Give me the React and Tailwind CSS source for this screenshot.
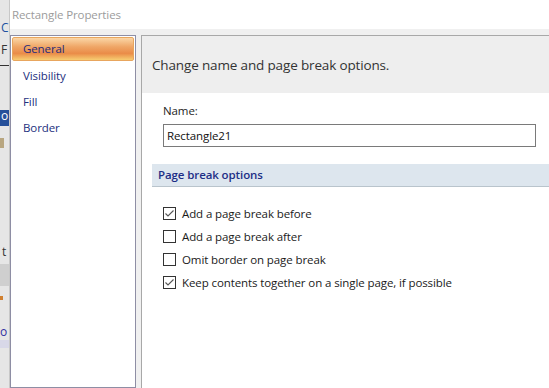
const items = ["General", "Visibility", "Fill", "Border"]

const options = [
  { label: "Add a page break before", checked: true },
  { label: "Add a page break after", checked: false },
  { label: "Omit border on page break", checked: false },
  { label: "Keep contents together on a single page, if possible", checked: true },
]

function CheckBox({ checked }) {
  return (
    <span className="flex h-[13px] w-[13px] shrink-0 items-center justify-center border border-[#333333] bg-white">
      {checked && (
        <svg width="11" height="11" viewBox="0 0 11 11" fill="none">
          <path d="M1.5 5.5 L4 8 L9.5 2.5" stroke="#555555" strokeWidth="1.1" />
        </svg>
      )}
    </span>
  )
}

// fragments of the window behind the dialog
function BackStrip() {
  return (
    <div className="flex w-[10px] shrink-0 flex-col border-r border-[#c8c8c8] bg-[#e6e6e6] text-[12px] leading-none">
      <div className="h-[22px]" />
      <div className="h-[14px] pl-[1px] text-[#2050a0]">C</div>
      <div className="h-[8px]" />
      <div className="h-[14px] pl-[1px] text-[#333]">F</div>
      <div className="h-[7px]" />
      <div className="h-[1px] bg-[#333]" />
      <div className="h-[44px]" />
      <div className="h-[16px] bg-[#26509a] pl-[1px] text-white">o</div>
      <div className="h-[12px]" />
      <div className="h-[10px] w-[4px] bg-[#b8a680]" />
      <div className="h-[98px]" />
      <div className="h-[12px] pl-[2px] text-[#333]">t</div>
      <div className="h-[6px]" />
      <div className="h-[22px] bg-[#cfcfcf]" />
      <div className="h-[10px]" />
      <div className="h-[4px] w-[3px] bg-[#d08030]" />
      <div className="h-[26px]" />
      <div className="h-[14px] text-[#3030a0]">o</div>
      <div className="h-[8px] bg-[#d8d8e8]" />
    </div>
  )
}

export default function App() {
  return (
    <div
      className="flex h-[388px] w-[549px] overflow-hidden bg-[#f0f0f0] tracking-[-0.1px]"
      style={{ fontFamily: '"Open Sans", "Noto Sans", sans-serif' }}
    >
      <BackStrip />
      <div className="flex min-w-0 flex-1 flex-col">
        <div className="flex h-[29px] shrink-0 items-center bg-white pl-[2px] text-[11.5px] text-[#9c9c9c]">
          Rectangle Properties
        </div>
        <div className="flex flex-1 gap-[5px] pt-[6px]">
          {/* nav list */}
          <div className="flex w-[126px] shrink-0 flex-col gap-[2px] border border-[#8e8ea4] bg-white px-[1px] pt-[1px]">
            {items.map((item, i) => (
              <div
                key={item}
                className={
                  i === 0
                    ? "flex h-[24px] items-center rounded-[2px] border border-[#e8a65e] bg-[linear-gradient(to_bottom,#fbd6a6_0%,#efa666_40%,#ea8c48_70%,#f7cd72_100%)] pl-[10px] text-[11.5px] text-[#1f2a7c]"
                    : "flex h-[24.4px] items-center pl-[11px] text-[11.5px] text-[#23307e]"
                }
              >
                {item}
              </div>
            ))}
          </div>

          {/* content */}
          <div className="flex min-w-0 flex-1 flex-col border-l border-t border-[#a8a8a8] bg-white">
            <div className="flex h-[57px] shrink-0 items-center bg-[#eeeeee] pl-[10px] pt-[1px] text-[13.5px] tracking-[-0.15px] text-[#333333]">
              Change name and page break options.
            </div>
            <div className="flex flex-col pl-[21px] pr-[13px] pt-[10px]">
              <div className="text-[11.5px] leading-[16px] text-[#1e1e1e]">Name:</div>
              <div className="mt-[5px] flex h-[23px] items-center border border-[#7a7a7a] bg-white pl-[3px] text-[11.5px] text-[#111]">
                Rectangle21
              </div>
            </div>
            <div className="ml-[10px] mt-[17px] flex h-[23px] items-center border-b border-[#b9c4cc] bg-[#dde6ee] pl-[6px] text-[11.5px] font-semibold text-[#1d2f86]">
              Page break options
            </div>
            <div className="flex flex-col gap-[10px] pl-[21px] pt-[20px]">
              {options.map((o) => (
                <div key={o.label} className="flex h-[13px] items-center gap-[6px] text-[11.5px] text-[#1a1a1a]">
                  <CheckBox checked={o.checked} />
                  <span className="leading-none">{o.label}</span>
                </div>
              ))}
            </div>
          </div>
        </div>
      </div>
    </div>
  )
}
